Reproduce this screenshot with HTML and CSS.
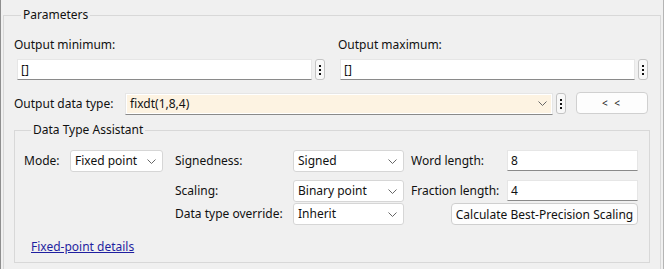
FILE: index.html
```html
<!DOCTYPE html>
<html lang="en">
<head>
  <meta charset="UTF-8" />
  <meta name="viewport" content="width=device-width, initial-scale=1.0" />
  <title>Block Parameters</title>
  <link rel="stylesheet" href="styles.css">
</head>
<body>
  <fieldset class="params">
    <legend>Parameters</legend>

    <div class="range-row">
      <div class="range-col">
        <div class="field-label">Output minimum:</div>
        <div class="field-line">
          <div class="text-input wide">[]</div>
          <span class="more-btn"><i></i><i></i><i></i></span>
        </div>
      </div>
      <div class="range-col second">
        <div class="field-label">Output maximum:</div>
        <div class="field-line">
          <div class="text-input wide">[]</div>
          <span class="more-btn"><i></i><i></i><i></i></span>
        </div>
      </div>
    </div>

    <div class="type-row">
      <span class="type-label">Output data type:</span>
      <div class="combo">
        <span class="combo-text">fixdt(1,8,4)</span>
        <svg class="chev" width="9" height="5" viewBox="0 0 9 5"><polyline points="0.5,0.5 4.5,4.5 8.5,0.5" fill="none" stroke="#666" stroke-width="1"/></svg>
      </div>
      <span class="more-btn"><i></i><i></i><i></i></span>
      <button class="collapse-btn">&lt; &lt;</button>
    </div>

    <fieldset class="assistant">
      <legend>Data Type Assistant</legend>
      <div class="assist-grid">
        <span class="lbl">Mode:</span>
        <div class="select mode">Fixed point
          <svg class="chev" width="9" height="5" viewBox="0 0 9 5"><polyline points="0.5,0.5 4.5,4.5 8.5,0.5" fill="none" stroke="#666" stroke-width="1"/></svg>
        </div>
        <span class="lbl">Signedness:</span>
        <div class="select">Signed
          <svg class="chev" width="9" height="5" viewBox="0 0 9 5"><polyline points="0.5,0.5 4.5,4.5 8.5,0.5" fill="none" stroke="#666" stroke-width="1"/></svg>
        </div>
        <span class="lbl">Word length:</span>
        <div class="text-input">8</div>

        <span></span>
        <span></span>
        <span class="lbl">Scaling:</span>
        <div class="select">Binary point
          <svg class="chev" width="9" height="5" viewBox="0 0 9 5"><polyline points="0.5,0.5 4.5,4.5 8.5,0.5" fill="none" stroke="#666" stroke-width="1"/></svg>
        </div>
        <span class="lbl">Fraction length:</span>
        <div class="text-input">4</div>

        <span></span>
        <span></span>
        <span class="lbl">Data type override:</span>
        <div class="select">Inherit
          <svg class="chev" width="9" height="5" viewBox="0 0 9 5"><polyline points="0.5,0.5 4.5,4.5 8.5,0.5" fill="none" stroke="#666" stroke-width="1"/></svg>
        </div>
        <button class="calc-btn">Calculate Best-Precision Scaling</button>
      </div>
      <a class="details-link" href="#">Fixed-point details</a>
    </fieldset>
  </fieldset>
</body>
</html>
```

FILE: styles.css
```css
body {
  margin: 0;
  padding-top: 7px;
  height: 262px;
  background: #f0f0f0;
  border-left: 1px solid #8e8e8e;
  border-right: 1px solid #b4b4b4;
  font-family: 'Noto Sans', 'Open Sans', sans-serif;
  font-size: 12px;
  color: #111;
  overflow: hidden;
}

fieldset {
  margin: 0;
  padding: 0;
  border: 1px solid #d8d8d8;
  min-width: 0;
}

legend {
  margin-left: 7px;
  padding: 0 2px;
  line-height: 16px;
}

.params {
  margin: 0 2px;
  padding: 14px 0 12px 10px;
}

.range-row {
  display: grid;
  grid-template-columns: 324px 1fr;
}

.field-label {
  line-height: 16px;
}

.field-line {
  display: flex;
  align-items: center;
  gap: 3px;
  margin-top: 6px;
  padding-left: 3px;
}

.range-col.second .field-line {
  padding-left: 2px;
}

.text-input {
  box-sizing: border-box;
  height: 21px;
  padding: 0 3px;
  background: #fff;
  border: 1px solid #e6e6e6;
  border-bottom-color: #8a8a8a;
  line-height: 19px;
}

.text-input.wide {
  width: 295px;
}

.more-btn {
  box-sizing: border-box;
  width: 10px;
  height: 21px;
  border: 1px solid #c4c4c4;
  border-radius: 3px;
  background: #f8f8f8;
  display: flex;
  flex-direction: column;
  align-items: center;
  justify-content: center;
  gap: 2px;
}

.more-btn i {
  width: 2px;
  height: 2px;
  background: #111;
}

.type-row {
  display: flex;
  align-items: center;
  height: 23px;
  margin-top: 12px;
}

.type-label {
  width: 111px;
}

.combo {
  box-sizing: border-box;
  width: 428px;
  height: 22px;
  display: flex;
  align-items: center;
  justify-content: space-between;
  padding: 0 5px 0 4px;
  background: #fdf3e2;
  border: 1px solid #e6e6e6;
  border-bottom-color: #8a8a8a;
  box-shadow: inset 0 0 0 1px #fff;
}

.type-row .more-btn {
  margin-left: 3px;
}

.collapse-btn {
  box-sizing: border-box;
  width: 72px;
  height: 22px;
  margin: -1px 0 0 10px;
  background: #fdfdfd;
  border: 1px solid #d0d0d0;
  border-radius: 4px;
  font-family: inherit;
  font-size: 10px;
  letter-spacing: 2px;
  color: #222;
}

.assistant {
  margin: 7px 10px 0 0;
  padding: 12px 0 7px 9px;
}

.assist-grid {
  display: grid;
  grid-template-columns: 46px 105px 118px 118px 96px 131px;
  grid-template-rows: 30px 23px 22px;
  align-items: start;
}

.lbl {
  line-height: 21px;
  white-space: nowrap;
}

.select {
  box-sizing: border-box;
  width: 111px;
  height: 22px;
  display: flex;
  align-items: center;
  justify-content: space-between;
  padding: 0 6px 0 4px;
  background: #fff;
  border: 1px solid #d6d6d6;
  border-radius: 3px;
  line-height: 20px;
}

.select.mode {
  width: 93px;
}

.assist-grid .text-input {
  width: 131px;
}

.calc-btn {
  grid-column: 5 / 7;
  justify-self: end;
  box-sizing: border-box;
  width: 187px;
  height: 22px;
  padding: 0;
  background: #fdfdfd;
  border: 1px solid #cfcfcf;
  border-radius: 4px;
  font-family: inherit;
  font-size: 12px;
  color: #111;
}

.details-link {
  display: inline-block;
  margin: 14px 0 0 7px;
  line-height: 16px;
  color: #1f1fa0;
}
```
